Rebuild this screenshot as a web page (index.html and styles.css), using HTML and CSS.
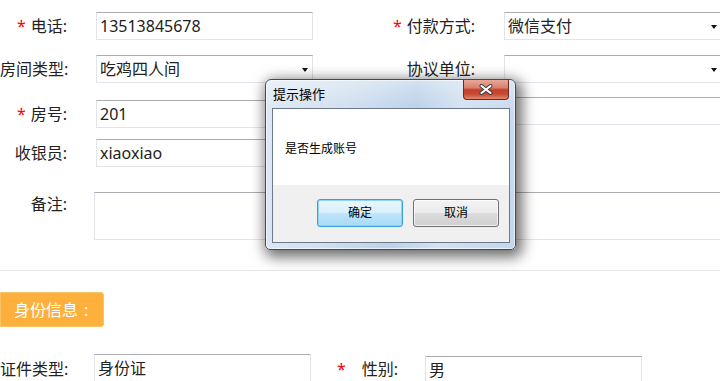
FILE: index.html
```html
<!DOCTYPE html>
<html lang="zh">
<head>
<meta charset="utf-8">
<title>表单</title>
<link rel="stylesheet" href="styles.css">
</head>
<body>
<div class="form">
  <div class="grid">
    <div class="lbl"><span class="req">*</span>电话:</div>
    <div class="box">13513845678</div>
    <div class="lbl"><span class="req">*</span>付款方式:</div>
    <div class="box select">微信支付</div>
  </div>
  <div class="grid g2">
    <div class="lbl">房间类型:</div>
    <div class="box select">吃鸡四人间</div>
    <div class="lbl">协议单位:</div>
    <div class="box select"></div>
  </div>
  <div class="grid g3">
    <div class="lbl"><span class="req">*</span>房号:</div>
    <div class="box">201</div>
    <div class="lbl"></div>
    <div class="box shift"></div>
  </div>
  <div class="grid g4">
    <div class="lbl">收银员:</div>
    <div class="box">xiaoxiao</div>
  </div>
  <div class="note-row">
    <div class="lbl lbl-top">备注:</div>
    <div class="area"></div>
  </div>
  <div class="sep"></div>
  <div class="tag">身份信息<span class="colon">:</span></div>
  <div class="id-row">
    <div class="lbl">证件类型:</div>
    <div class="box wide">身份证</div>
    <div class="lbl sex-lbl"><span class="req req-far">*</span>性别:</div>
    <div class="box wide low">男</div>
  </div>
</div>

<div class="dialog">
  <div class="titlebar">
    <span class="title">提示操作</span>
    <span class="close">
      <svg width="14" height="11" viewBox="0 0 14 11">
        <path d="M2.5 2 L11.5 9 M2.5 9 L11.5 2" stroke="#3a3a3a" stroke-width="4" stroke-linecap="round" fill="none"/>
        <path d="M2.5 2 L11.5 9 M2.5 9 L11.5 2" stroke="#ffffff" stroke-width="2.2" stroke-linecap="round" fill="none"/>
      </svg>
    </span>
  </div>
  <div class="client">
    <div class="msg">是否生成账号</div>
    <div class="actions">
      <span class="btn btn-ok">确定</span>
      <span class="btn">取消</span>
    </div>
  </div>
</div>
</body>
</html>
```

FILE: styles.css
```css
* { box-sizing: border-box; }
html, body { margin: 0; padding: 0; }
body {
  width: 720px;
  height: 381px;
  overflow: hidden;
  position: relative;
  background: #fff;
  color: #222;
  font-family: "Noto Sans", "Noto Sans CJK SC", sans-serif;
  font-size: 16px;
}
.form { padding-top: 12px; }
.grid {
  display: grid;
  grid-template-columns: 96px 217px 191px 218px;
  align-items: center;
  height: 28px;
}
.g2 { margin-top: 15px; }
.g3 { margin-top: 17px; }
.g4 { margin-top: 11px; }
.lbl {
  text-align: right;
  padding-right: 29px;
  white-space: nowrap;
  line-height: 20px;
  height: 20px;
}
.req { color: #f00; margin-right: 5px; }
.box {
  height: 28px;
  border: 1px solid #e1e4ea;
  border-top-color: #abadb3;
  padding-left: 3px;
  line-height: 26px;
  white-space: nowrap;
  position: relative;
  background: #fff;
}
.select::after {
  content: "";
  position: absolute;
  right: 4px;
  top: 12px;
  border-left: 3.5px solid transparent;
  border-right: 3.5px solid transparent;
  border-top: 4px solid #111;
}
.shift { align-self: start; margin-top: -3px; }

.note-row { display: flex; margin-top: 25px; }
.note-row .lbl { width: 94px; padding-right: 27px; flex: none; }
.lbl-top { margin-top: 2px; }
.area {
  width: 630px;
  height: 48px;
  border: 1px solid #e1e4ea;
  border-top-color: #abadb3;
  flex: none;
}
.sep { height: 1px; background: #e6e6e6; margin-top: 30px; }
.tag {
  display: inline-block;
  margin-top: 21px;
  width: 104px;
  height: 35px;
  line-height: 34px;
  padding-left: 13px;
  background: #fdb03c;
  border: 1px solid #fcc26a;
  border-radius: 0 3px 3px 0;
  color: #fff;
  font-size: 16px;
}
.colon { margin-left: 6px; }
.id-row { display: flex; align-items: flex-start; margin-top: 27px; }
.id-row .lbl { width: 94px; padding-right: 27px; flex: none; margin-top: 5px; }
.id-row .sex-lbl { width: 114px; }
.req-far { margin-right: 16px; }
.wide { width: 217px; flex: none; }
.low { margin-top: 2px; }

/* dialog */
.dialog {
  position: absolute;
  left: 265px;
  top: 79px;
  width: 251px;
  height: 171px;
  border: 1px solid #3e4b5a;
  border-radius: 6px 6px 5px 5px;
  background:
    linear-gradient(180deg, rgba(255,255,255,0.35) 0%, rgba(255,255,255,0) 28px),
    linear-gradient(100deg, #dfe9f5 0%, #d2e0f0 30%, #bcd2ea 55%, #d4e2f1 72%, #c3d7ec 100%);
  box-shadow: 3px 4px 14px 3px rgba(0,0,0,0.58), inset 0 0 0 1px rgba(255,255,255,0.6);
  padding: 0 5px 6px 6px;
  display: flex;
  flex-direction: column;
}
.titlebar {
  height: 28px;
  display: flex;
  align-items: flex-start;
  justify-content: space-between;
}
.title {
  font-size: 13px;
  line-height: 14px;
  margin-top: 7px;
  margin-left: 1px;
  color: #000;
}
.close {
  width: 46px;
  height: 20px;
  margin-right: 1px;
  border: 1px solid #6a2a22;
  border-top: none;
  border-radius: 0 0 4px 4px;
  background: linear-gradient(180deg, #e9a898 0%, #d98270 40%, #c2412b 52%, #c94a33 75%, #e08a6f 100%);
  display: flex;
  align-items: center;
  justify-content: center;
}
.close svg { display: block; }
.client {
  flex: 1;
  border: 1px solid #6b798a;
  background: #f0f0f0;
  display: flex;
  flex-direction: column;
}
.msg {
  background: #fff;
  height: 76px;
  font-size: 12px;
  line-height: 16px;
  padding: 32px 0 0 12px;
  color: #000;
}
.actions {
  display: flex;
  justify-content: flex-end;
  gap: 10px;
  padding: 14px 10px 0 0;
}
.btn {
  width: 86px;
  height: 28px;
  border: 1px solid #707070;
  border-radius: 3px;
  background: linear-gradient(180deg, #f3f3f3 0%, #ebebeb 48%, #dcdcdc 52%, #cfcfcf 100%);
  box-shadow: inset 0 0 0 1px rgba(255,255,255,0.7);
  font-size: 12px;
  line-height: 26px;
  text-align: center;
  color: #000;
}
.btn-ok {
  border-color: #3c9fd8;
  background: linear-gradient(180deg, #eaf6fd 0%, #d9f0fc 48%, #bee6fd 52%, #a7d9f5 100%);
  box-shadow: inset 0 0 0 1px #8fd3f7;
}
```
